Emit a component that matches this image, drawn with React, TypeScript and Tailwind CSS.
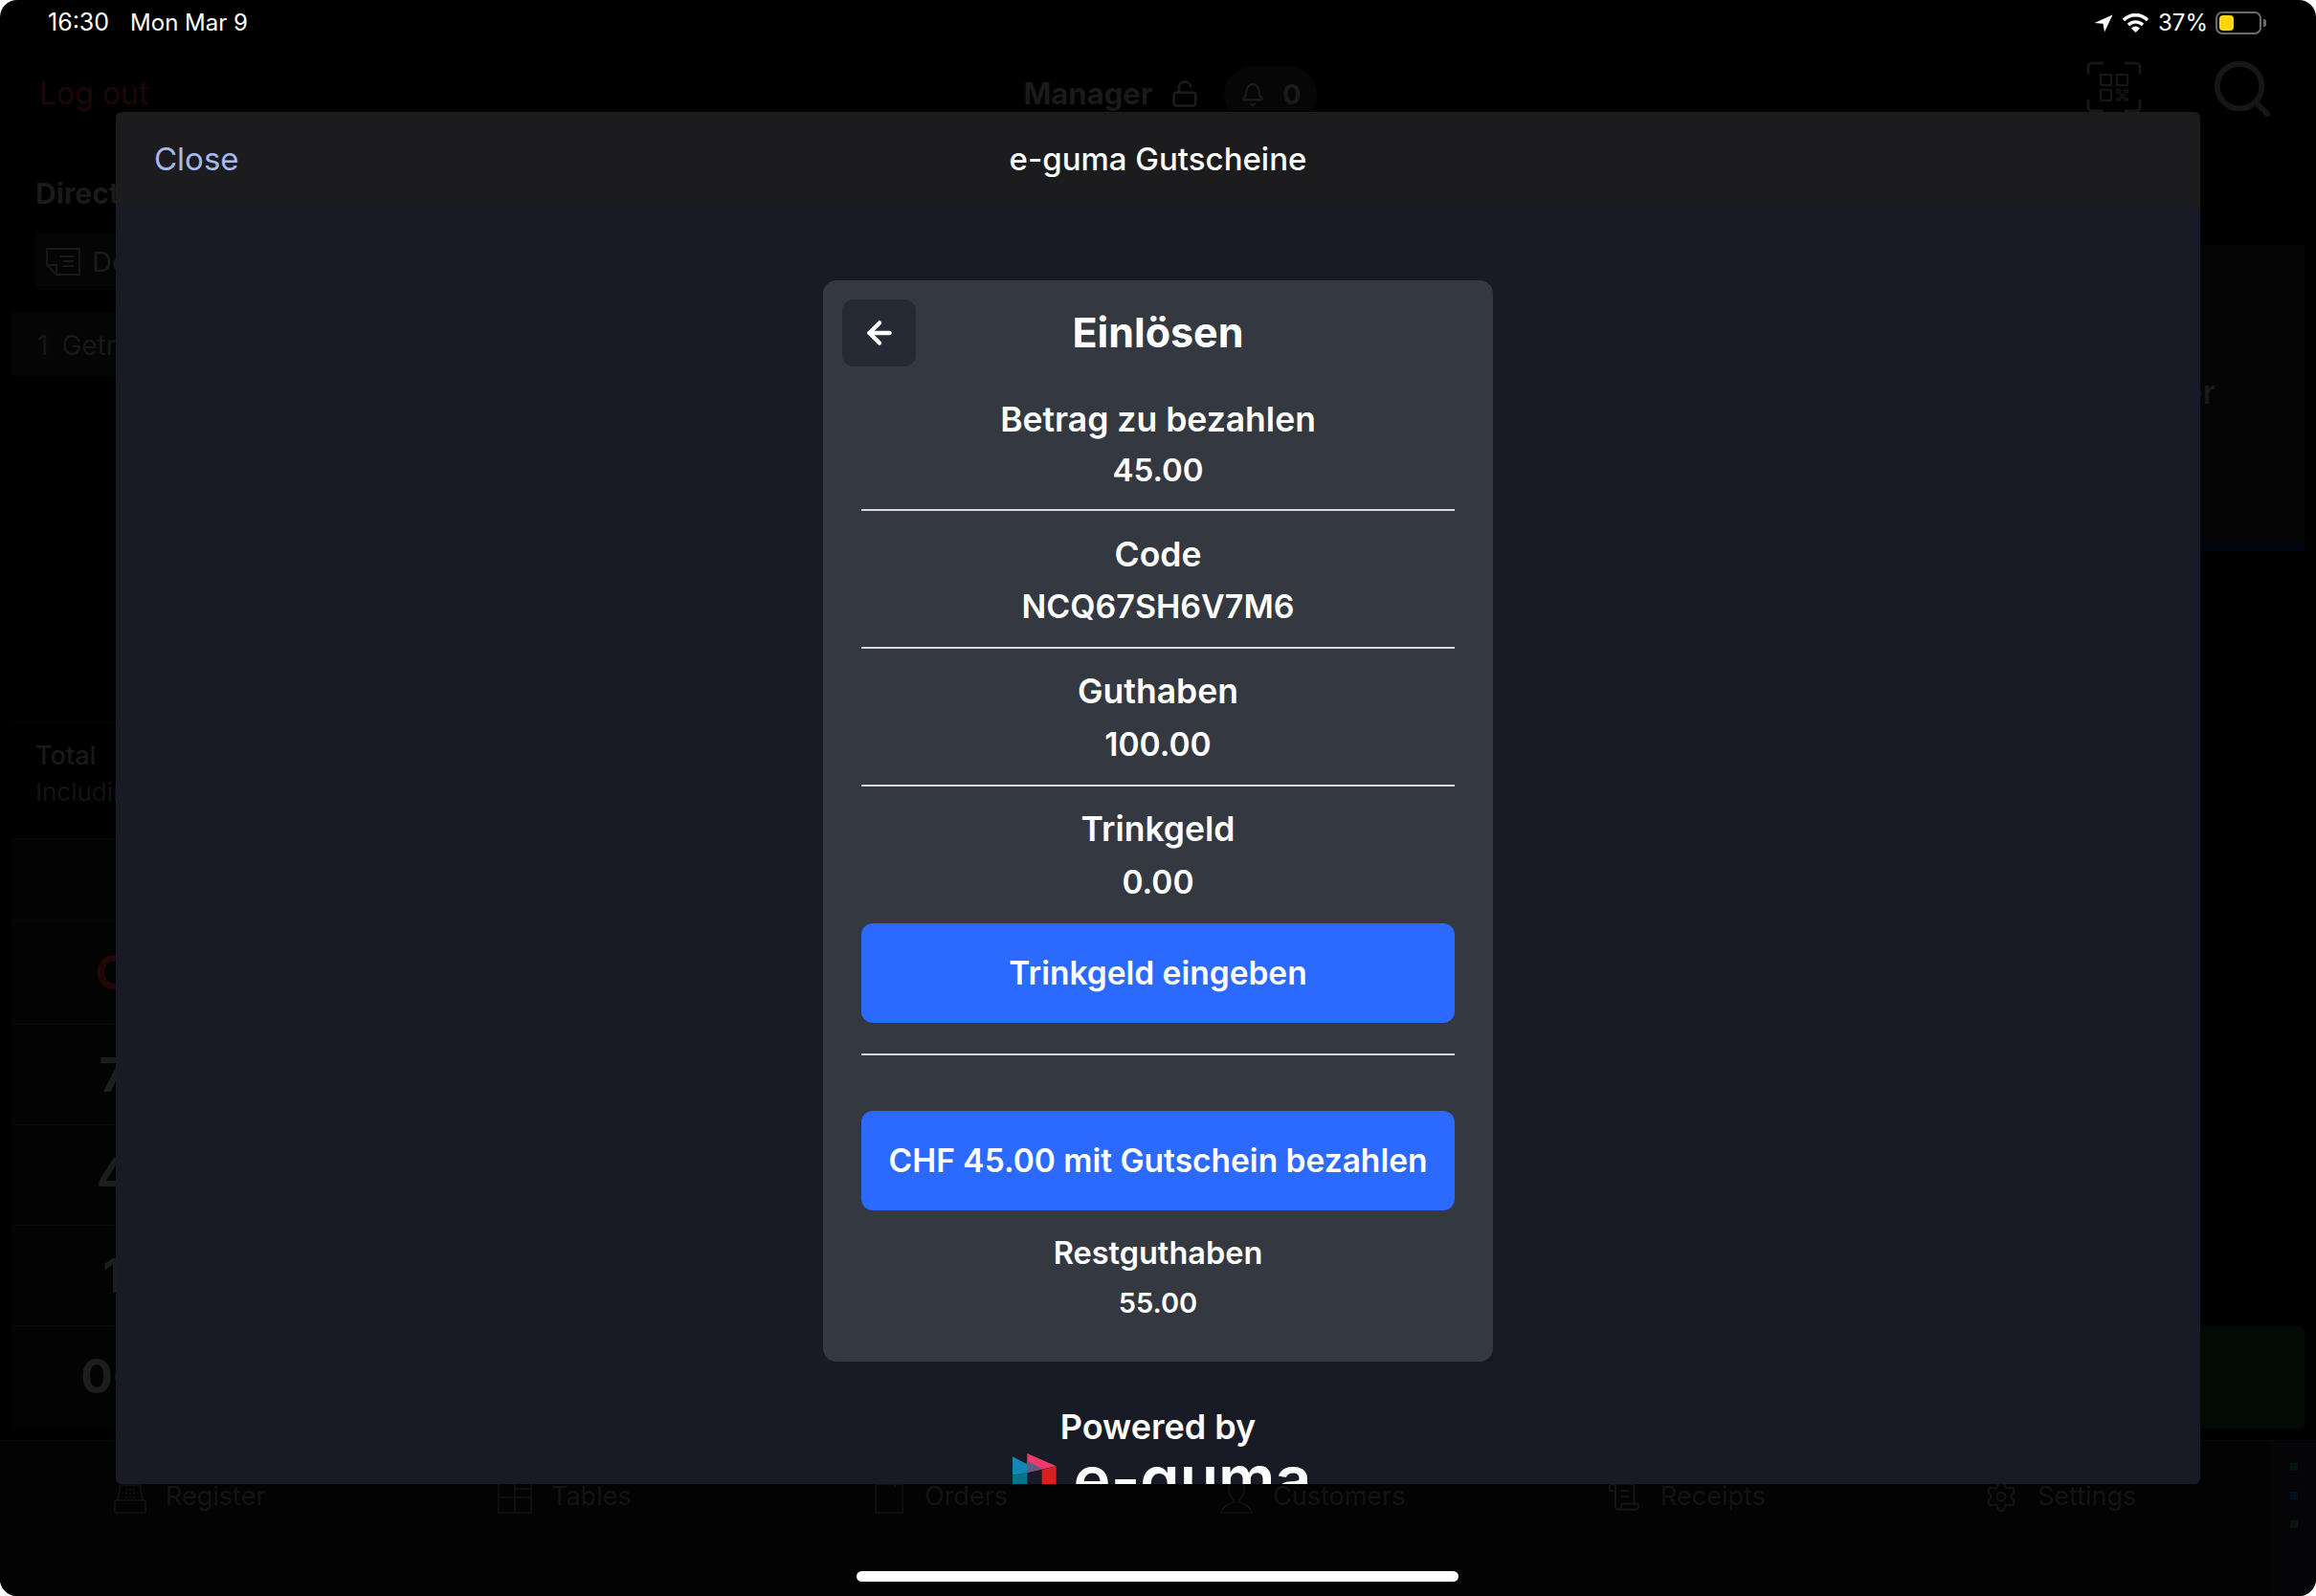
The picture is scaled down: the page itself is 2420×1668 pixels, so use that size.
import { ArrowLeft, Bell, LockOpen, Search, Settings, ScrollText } from "lucide-react";

function RegisterIcon() {
  return (
    <svg width="36" height="36" viewBox="0 0 36 36" fill="none" stroke="#131313" strokeWidth="1.6">
      <path d="M5 22 8 6h20l3 16" />
      <rect x="2" y="22" width="32" height="13" rx="2" />
      <path d="M13 11h2M17 11h2M21 11h2M13 15h2M17 15h2M21 15h2M13 19h2M17 19h2M21 19h2" />
    </svg>
  );
}

function TablesIcon() {
  return (
    <svg width="36" height="36" viewBox="0 0 36 36" fill="none" stroke="#131313" strokeWidth="1.6">
      <rect x="1" y="1" width="34" height="34" />
      <path d="M1 19h34M18 1v34M18 10h17" />
    </svg>
  );
}

function OrdersIcon() {
  return (
    <svg width="30" height="36" viewBox="0 0 30 36" fill="none" stroke="#131313" strokeWidth="1.6">
      <rect x="1" y="5" width="28" height="30" />
      <path d="M21 1v8" />
    </svg>
  );
}

function CustomersIcon() {
  return (
    <svg width="36" height="36" viewBox="0 0 36 36" fill="none" stroke="#131313" strokeWidth="1.6">
      <path d="M18 1c-5 0-8 4-8 9s2 9 5 11v3c-6 2-12 5-13 11h32c-1-6-7-9-13-11v-3c3-2 5-6 5-11s-3-9-8-9z" />
    </svg>
  );
}

function NoteIcon() {
  return (
    <svg width="36" height="29" viewBox="0 0 36 29" fill="none" stroke="#1a1a1a" strokeWidth="1.8">
      <path d="M1 1h34v27H11L1 18z" />
      <path d="M11 28v-10H1M15 9h14M18 14h11M18 19h11" />
    </svg>
  );
}

const navItems = [
  { label: "Register", icon: <RegisterIcon />, width: "w-[402px]", gap: "gap-[19px]" },
  { label: "Tables", icon: <TablesIcon />, width: "w-[394px]", gap: "gap-[20px]" },
  { label: "Orders", icon: <OrdersIcon />, width: "w-[360px]", gap: "gap-[22px]" },
  { label: "Customers", icon: <CustomersIcon />, width: "w-[405px]", gap: "gap-[20px]" },
  { label: "Receipts", icon: <ScrollText size={36} color="#131313" strokeWidth={1.5} />, width: "w-[394px]", gap: "gap-[20px]" },
  { label: "Settings", icon: <Settings size={36} color="#131313" strokeWidth={1.5} />, width: "w-[300px]", gap: "gap-[20px]" },
];

const keypad = [
  { key: "", h: "h-[86px]", color: "text-[#1d1d1d]" },
  { key: "C", h: "h-[108px]", color: "text-[#210806]" },
  { key: "7", h: "h-[105px]", color: "text-[#1d1d1d]" },
  { key: "4", h: "h-[105px]", color: "text-[#1d1d1d]" },
  { key: "1", h: "h-[105px]", color: "text-[#1d1d1d]" },
  { key: "00", h: "h-[106px]", color: "text-[#1d1d1d]" },
];

function StatusBar() {
  return (
    <div className="h-[48px] flex items-center pl-[50px] pr-[52px] text-white text-[24px] font-normal shrink-0">
      <span className="text-[25px]">16:30</span>
      <span className="ml-[22px] text-[24px]">Mon Mar 9</span>
      <div className="ml-auto flex items-center">
        <svg width="20" height="19" viewBox="0 0 20 19">
          <path d="M19.5 0.5 L0.5 9 L9.5 9.8 L11 18.5 Z" fill="#fff" />
        </svg>
        <svg className="ml-[9px]" width="29" height="20" viewBox="0 0 29 20" fill="none">
          <path d="M2 7 A17.5 17.5 0 0 1 27 7" stroke="#fff" strokeWidth="3.4" />
          <path d="M7 12 A10.5 10.5 0 0 1 22 12" stroke="#fff" strokeWidth="3.4" />
          <path d="M14.5 20 L10 15.4 A6.4 6.4 0 0 1 19 15.4 Z" fill="#fff" />
        </svg>
        <span className="ml-[9px] text-[24px] w-[51px] whitespace-nowrap">37%</span>
        <div className="ml-[9px] w-[48px] h-[24px] rounded-[7px] border-2 border-[#6b6b6b] p-[2px]">
          <div className="w-[15px] h-full rounded-[4px] bg-[#ffd60a]" />
        </div>
        <div className="ml-[2px] w-[3px] h-[8px] rounded-r-[2px] bg-[#6b6b6b]" />
      </div>
    </div>
  );
}

function AppHeader() {
  return (
    <div className="h-[100px] mb-[10px] flex items-center shrink-0 pl-[41px] pr-[42px]">
      <span className="text-[32px] text-[#1c0806]">Log out</span>
      <span className="ml-[914px] text-[31px] font-bold text-[#1a1a1a]">Manager</span>
      <LockOpen className="ml-[19px]" size={30} color="#1c1c1c" strokeWidth={2} />
      <div className="ml-[26px] w-[97px] h-[60px] mt-[1px] rounded-full bg-[#060606] flex items-center justify-center gap-[18px]">
        <Bell size={26} color="#1c1c1c" strokeWidth={2} />
        <span className="text-[29px] font-bold text-[#1a1a1a]">0</span>
      </div>
      <svg className="ml-auto -mt-[14px]" width="58" height="54" viewBox="0 0 58 54" fill="none" stroke="#161616" strokeWidth="3">
        <path d="M2 14V6a4 4 0 0 1 4-4h12M40 2h12a4 4 0 0 1 4 4v8M56 40v8a4 4 0 0 1-4 4H40M18 52H6a4 4 0 0 1-4-4v-8" />
        <rect x="15" y="14" width="11" height="11" strokeWidth="2" />
        <rect x="32" y="14" width="11" height="11" strokeWidth="2" />
        <rect x="15" y="30" width="11" height="11" strokeWidth="2" />
        <path d="M32 30h3v3h-3zM40 30h3v3h-3zM36 35h3v3h-3zM32 39h3v2h-3zM40 39h3v2h-3z" strokeWidth="1.5" />
      </svg>
      <Search className="ml-[70px] -mt-[10px]" size={70} color="#161616" strokeWidth={2} />
    </div>
  );
}

function LeftColumn() {
  return (
    <div className="w-[1100px] flex flex-col">
      <div className="ml-[25px] mt-[28px] text-[30px] leading-[32px] font-bold text-[#1a1a1a]">Direct sale</div>
      <div className="ml-[25px] mt-[26px] h-[59px] w-[300px] rounded-[4px] bg-[#050505] flex items-center pl-[11px]">
        <NoteIcon />
        <span className="ml-[12px] text-[29px] text-[#1a1a1a]">Details</span>
      </div>
      <div className="mt-[23px] h-[67px] rounded-[4px] bg-[#050505] flex items-center pl-[27px] pt-[2px] text-[28px] text-[#171717]">
        <span>1</span>
        <span className="ml-[14px]">Getränk</span>
      </div>
      <div className="mt-[362px] border-t border-[#080808] pt-[17px] pl-[25px]">
        <div className="text-[27px] leading-[34px] font-medium text-[#1a1a1a]">Total</div>
        <div className="mt-[4px] text-[26px] leading-[34px] text-[#131313]">Including</div>
      </div>
      <div className="mt-[31px] rounded-[4px] bg-[#030303] flex flex-col">
        {keypad.map((row, i) => (
          <div key={i} className={`${row.h} border-t border-[#070707] flex items-center`}>
            <span className={`w-[212px] text-center text-[50px] font-bold ${row.color}`}>{row.key}</span>
          </div>
        ))}
      </div>
    </div>
  );
}

function RightColumn() {
  return (
    <div className="ml-auto mr-[12px] w-[500px] flex flex-col pt-[98px] pb-[12px]">
      <div className="h-[320px] rounded-[4px] bg-[#040404] flex flex-col overflow-hidden">
        <div className="flex-1 flex items-center justify-end pr-[93px] pb-[2px] text-[34px] font-semibold text-[#181818]">
          er
        </div>
        <div className="h-[11px] bg-[#00040f]" />
      </div>
      <div className="mt-auto h-[107px] rounded-[6px] bg-[#030a04]" />
    </div>
  );
}

function BottomBar() {
  return (
    <div className="h-[163px] shrink-0 flex border-t border-[#070707]">
      <div className="flex-1 bg-[#030303] flex items-start pl-[118px] pt-[39px]">
        {navItems.map((item) => (
          <div key={item.label} className={`${item.width} ${item.gap} flex items-center shrink-0`}>
            {item.icon}
            <span className="text-[27px] leading-[38px] text-[#131313]">{item.label}</span>
          </div>
        ))}
      </div>
      <div className="w-[72px] bg-[#050508] flex flex-col items-center gap-[22px] pt-[23px]">
        <div className="w-[8px] h-[8px] bg-[#07140e]" />
        <div className="w-[8px] h-[8px] bg-[#050d24]" />
        <div className="w-[8px] h-[8px] bg-[#07140e]" />
      </div>
    </div>
  );
}

function Row({ label, value, top, gap, bottom, line, size }: { label: string; value: string; top: string; gap: string; bottom: string; line?: boolean; size: string }) {
  return (
    <div className={`flex flex-col items-center ${top} ${bottom} ${line ? "border-b-2 border-[#d8d8d8]" : ""}`}>
      <div className="text-[35.5px] leading-[52px] font-semibold">{label}</div>
      <div className={`${size} leading-[52px] font-semibold ${gap}`}>{value}</div>
    </div>
  );
}

function Logo() {
  return (
    <div className="mt-[2px] flex items-start ml-[8px]">
      <svg width="46" height="50" viewBox="48 112 138 150">
        <polygon points="48,122 94,146 94,172 48,180" fill="#1487b8" />
        <polygon points="48,180 94,172 94,262 48,262" fill="#04748c" />
        <polygon points="94,112 185,152 94,172" fill="#ec3a6a" />
        <polygon points="94,136 140,160 94,172" fill="#5a5f8a" />
        <polygon points="140,163 185,152 185,262 140,262" fill="#d92020" />
      </svg>
      <span className="ml-[18px] text-[66px] leading-[52px] font-semibold text-white">e-guma</span>
    </div>
  );
}

function VoucherModal() {
  return (
    <div className="absolute left-[121px] top-[117px] w-[2178px] h-[1434px] rounded-[6px] overflow-hidden flex flex-col">
      <div className="h-[100px] shrink-0 bg-[#1c1c1e] relative flex items-center justify-center">
        <span className="absolute left-[40px] text-[33px] font-normal text-[#a5b8f0]">Close</span>
        <span className="text-[33px] font-medium text-white">e-guma Gutscheine</span>
      </div>
      <div className="flex-1 bg-[#181b26] flex flex-col items-center pt-[76px] text-white overflow-hidden">
        <div className="w-[700px] shrink-0 rounded-[14px] bg-[#343840] flex flex-col px-[40px] pb-[36px]">
          <div className="relative -mx-[20px] mt-[20px] h-[70px] flex items-center justify-center">
            <button className="absolute left-0 top-0 w-[77px] h-[70px] rounded-[12px] bg-[#262a35] flex items-center justify-center">
              <ArrowLeft size={36} color="#fff" strokeWidth={3} />
            </button>
            <span className="text-[43px] font-bold -mt-[2px]">Einlösen</span>
          </div>
          <Row label="Betrag zu bezahlen" value="45.00" size="text-[33px]" top="pt-[30px]" gap="mt-0" bottom="pb-[15px]" line />
          <Row label="Code" value="NCQ67SH6V7M6" size="text-[34px]" top="pt-[20px]" gap="mt-[2px]" bottom="pb-[16px]" line />
          <Row label="Guthaben" value="100.00" size="text-[33.5px]" top="pt-[19px]" gap="mt-[3px]" bottom="pb-[16px]" line />
          <Row label="Trinkgeld" value="0.00" size="text-[33.5px]" top="pt-[19px]" gap="mt-[3px]" bottom="pb-0" />
          <button className="mt-[17px] h-[104px] rounded-[12px] bg-[#2b69ff] text-[33.5px] font-semibold">Trinkgeld eingeben</button>
          <div className="mt-[32px] h-[2px] bg-[#d8d8d8]" />
          <button className="mt-[58px] h-[104px] rounded-[12px] bg-[#2b69ff] text-[33.5px] font-semibold whitespace-nowrap">
            CHF 45.00 mit Gutschein bezahlen
          </button>
          <div className="mt-[20px] text-center text-[32.5px] leading-[50px] font-semibold">Restguthaben</div>
          <div className="mt-[2px] text-center text-[29px] leading-[50px] font-semibold">55.00</div>
        </div>
        <div className="mt-[42px] text-[36px] leading-[52px] font-semibold">Powered by</div>
        <Logo />
      </div>
    </div>
  );
}

export default function App() {
  return (
    <div className="w-[2420px] h-[1668px] bg-white overflow-hidden font-['Inter',sans-serif]">
      <div className="relative w-full h-full rounded-[18px] bg-black overflow-hidden flex flex-col">
        <StatusBar />
        <AppHeader />
        <div className="flex-1 min-h-0 flex pl-[12px]">
          <LeftColumn />
          <RightColumn />
        </div>
        <BottomBar />
        <VoucherModal />
        <div className="absolute left-[895px] top-[1642px] w-[629px] h-[11px] rounded-full bg-white" />
      </div>
    </div>
  );
}
